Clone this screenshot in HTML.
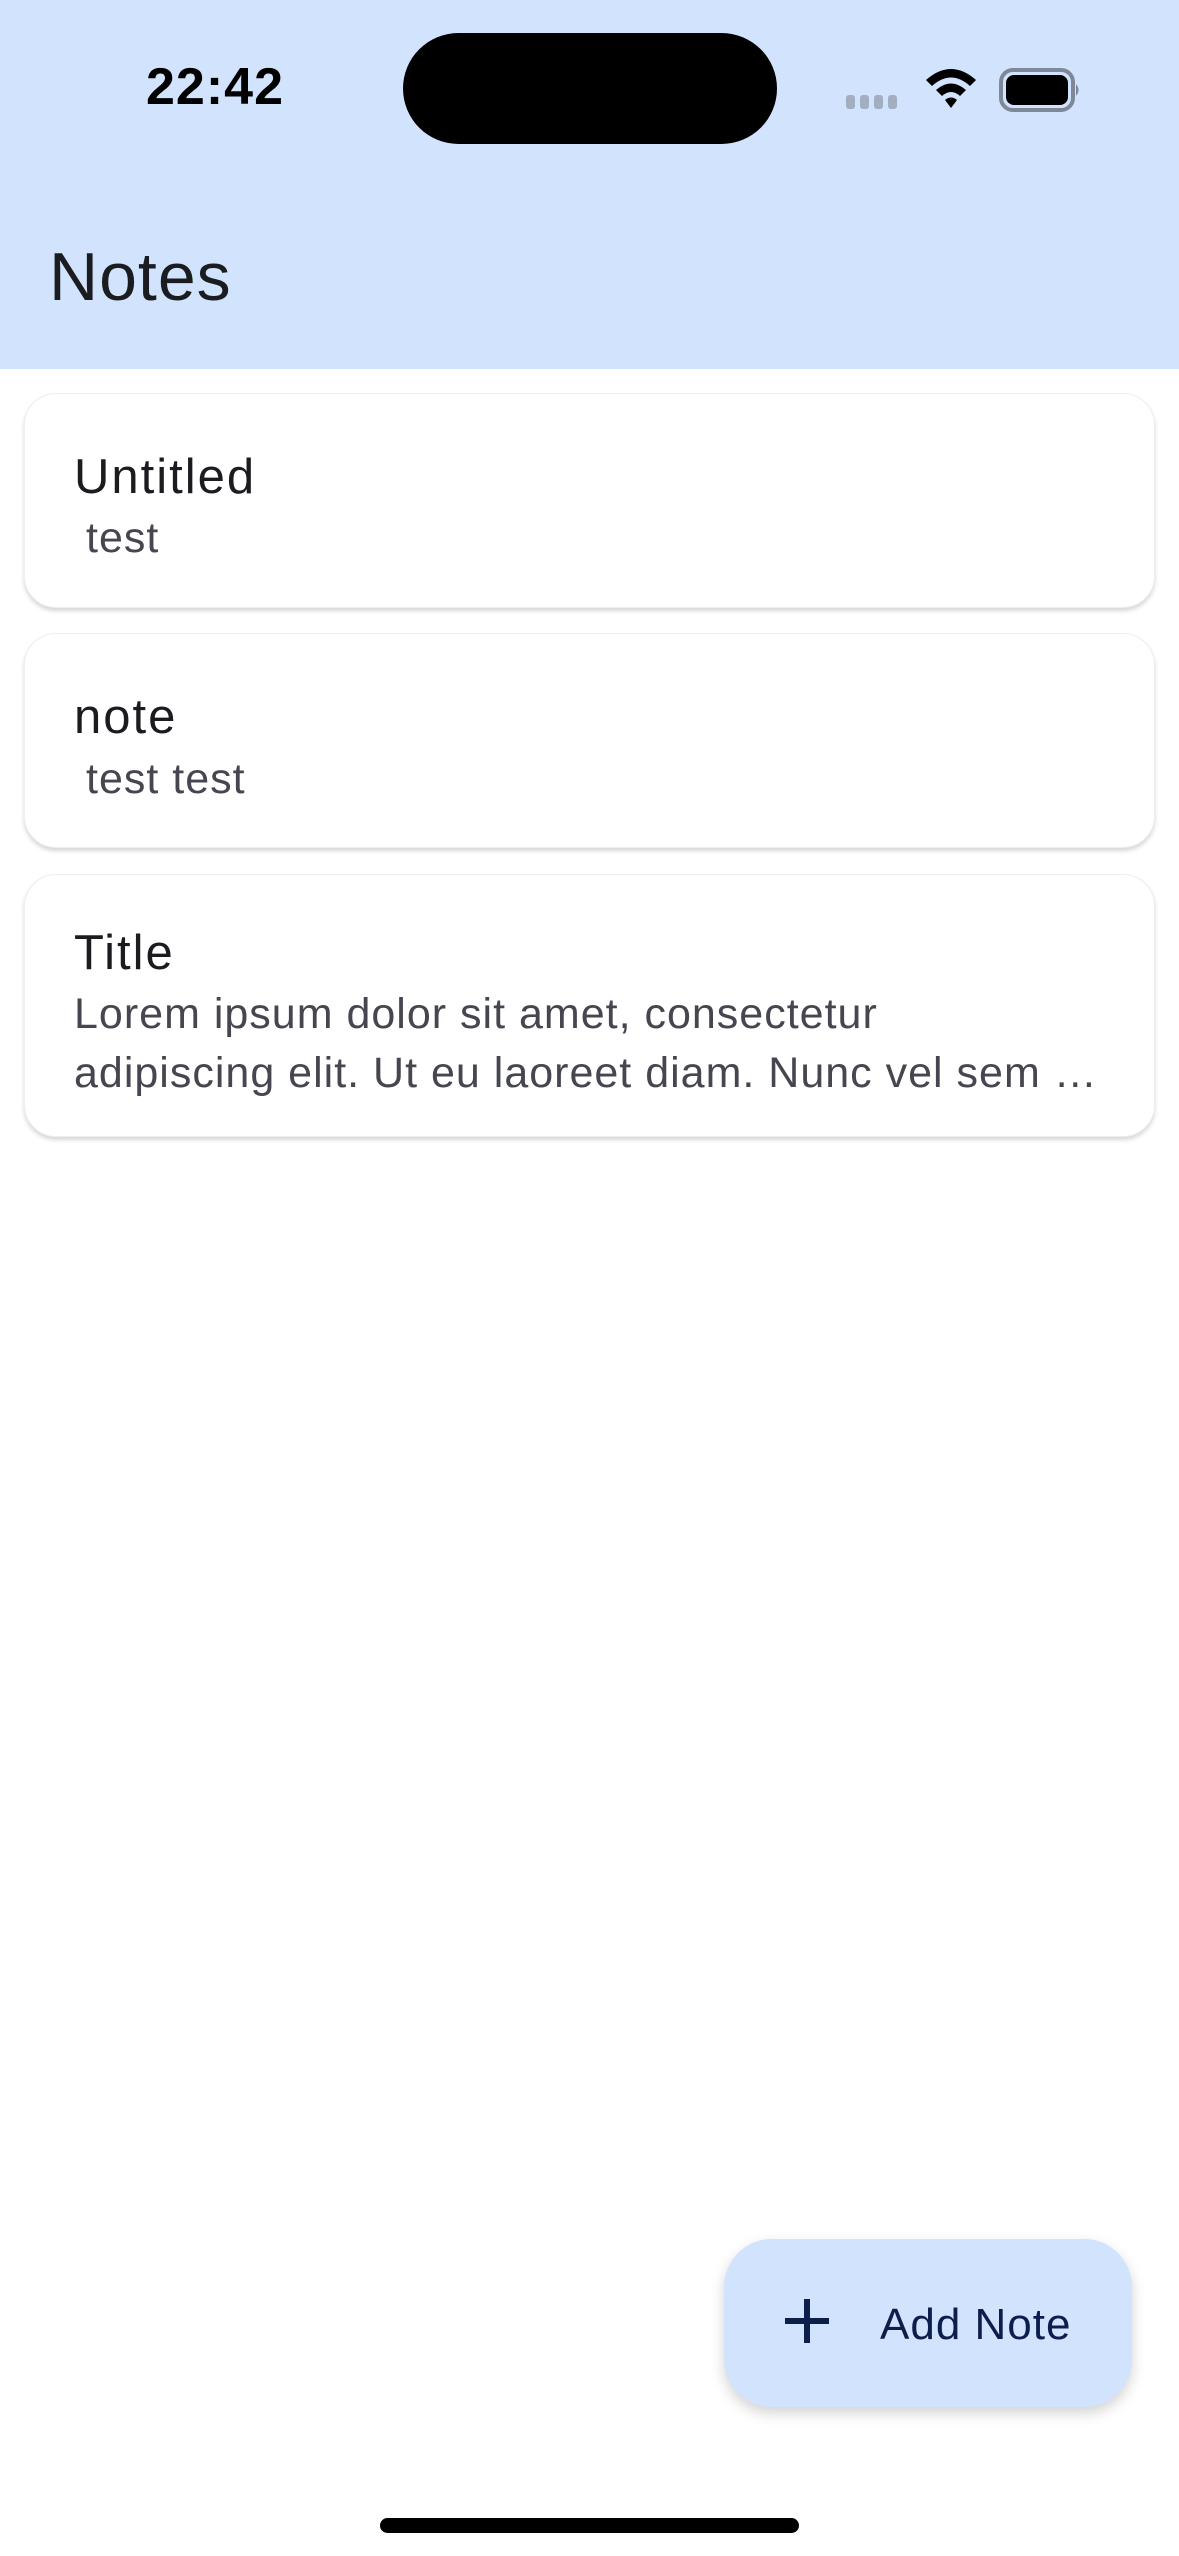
<!DOCTYPE html>
<html><head><meta charset="utf-8"><style>
*{margin:0;padding:0;box-sizing:border-box}
body{width:1179px;height:2556px;background:#fff;position:relative;overflow:hidden;font-family:"Liberation Sans",sans-serif}
.hdr{position:absolute;left:0;top:0;width:1179px;height:369px;background:#d1e3fd}
.time{position:absolute;left:146px;top:57px;font-size:52px;font-weight:bold;color:#000;letter-spacing:1px}
.island{position:absolute;left:403px;top:33px;width:374px;height:111px;background:#000;border-radius:56px}
.title{position:absolute;left:49px;top:238px;font-size:68px;color:#1a1c20;letter-spacing:1px}
.card{position:absolute;left:24px;width:1131px;background:#fff;border-radius:32px;border:1px solid #eee;box-shadow:0 3px 4px rgba(0,0,0,0.16)}
.t{position:absolute;left:49px;font-size:49px;color:#1a1c20;letter-spacing:2px}
.s{position:absolute;left:49px;font-size:43px;color:#45464f;letter-spacing:1px;line-height:59px}
.fab{position:absolute;left:724px;top:2239px;width:408px;height:168px;background:#d1e3fd;border-radius:48px;box-shadow:0 6px 14px rgba(0,0,0,0.18)}
.fab span{position:absolute;left:156px;top:61px;font-size:44px;color:#0c1e4c;letter-spacing:1px}
.home{position:absolute;left:380px;top:2518px;width:419px;height:15px;background:#000;border-radius:8px}
</style></head><body>
<div class="hdr"></div>
<div class="time">22:42</div>
<div class="island"></div>
<svg style="position:absolute;left:840px;top:60px" width="250" height="60" viewBox="0 0 250 60">
<g fill="#a3aec0"><rect x="6" y="35" width="9" height="14" rx="3"/><rect x="20" y="35" width="9" height="14" rx="3"/><rect x="34" y="35" width="9" height="14" rx="3"/><rect x="48" y="35" width="9" height="14" rx="3"/></g>
<g fill="#000"><path d="M86 20 Q111 -2 136 20 L130 26 Q111 9 92 26 Z"/><path d="M96 30 Q111 17 126 30 L120 36 Q111 28 102 36 Z"/><path d="M105 40 Q111 35 117 40 L111 48 Z"/></g>
<rect x="161" y="10" width="72" height="40" rx="12" fill="none" stroke="#7f8898" stroke-width="4"/>
<rect x="166" y="15" width="62" height="30" rx="8" fill="#000"/>
<path d="M236 24 q5 6 0 12 z" fill="#7f8898"/>
</svg>
<div class="title">Notes</div>
<div class="card" style="top:393px;height:215px"><div class="t" style="top:55px">Untitled</div><div class="s" style="top:115px;left:61px">test</div></div>
<div class="card" style="top:633px;height:215px"><div class="t" style="top:55px">note</div><div class="s" style="top:116px;left:61px">test test</div></div>
<div class="card" style="top:874px;height:263px"><div class="t" style="top:50px">Title</div><div class="s" style="top:110px;width:1080px">Lorem ipsum dolor sit amet, consectetur<br>adipiscing elit. Ut eu laoreet diam. Nunc vel sem …</div></div>
<div class="fab"><svg style="position:absolute;left:61px;top:60px" width="44" height="44"><rect x="0" y="19" width="44" height="6" fill="#0c1e4c"/><rect x="19" y="0" width="6" height="44" fill="#0c1e4c"/></svg><span>Add Note</span></div>
<div class="home"></div>
</body></html>
